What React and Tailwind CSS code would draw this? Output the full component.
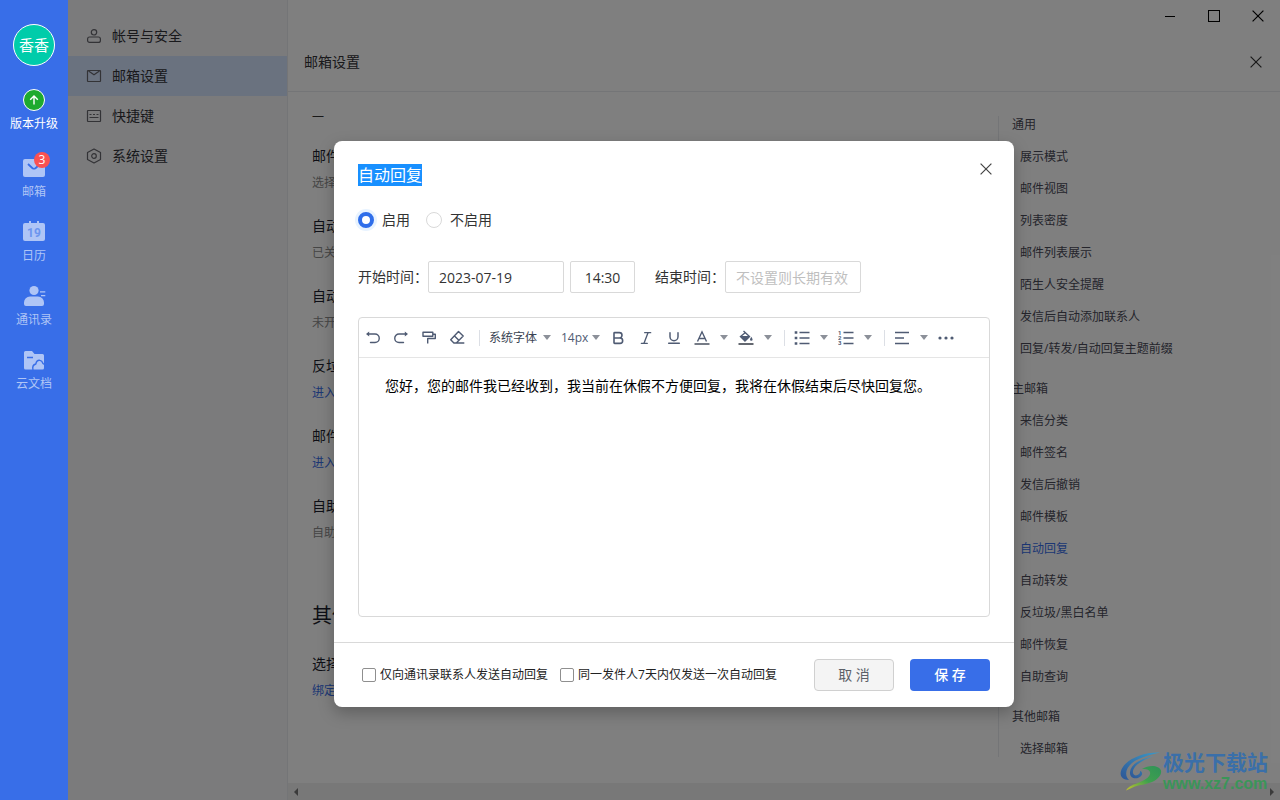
import { Bold, Italic, Underline } from "lucide-react";

const settingsMenu = [
  { label: "帐号与安全", icon: AccountIcon },
  { label: "邮箱设置", icon: MailIcon, active: true },
  { label: "快捷键", icon: KeyboardIcon },
  { label: "系统设置", icon: SystemIcon },
];

const railItems = [
  { label: "邮箱", icon: RailMailIcon, badge: 3 },
  { label: "日历", icon: RailCalendarIcon },
  { label: "通讯录", icon: RailContactsIcon },
  { label: "云文档", icon: RailDocsIcon },
];

const settings = [
  { title: "邮件模板", note: "选择" },
  { title: "自动回复", note: "已关闭" },
  { title: "自动转发", note: "未开启" },
  { title: "反垃圾", link: "进入" },
  { title: "邮件恢复", link: "进入" },
  { title: "自助查询", note: "自助查询" },
];

const anchors = [
  {
    title: "通用",
    items: [
      "展示模式",
      "邮件视图",
      "列表密度",
      "邮件列表展示",
      "陌生人安全提醒",
      "发信后自动添加联系人",
      "回复/转发/自动回复主题前缀",
    ],
  },
  {
    title: "主邮箱",
    items: [
      "来信分类",
      "邮件签名",
      "发信后撤销",
      "邮件模板",
      "自动回复",
      "自动转发",
      "反垃圾/黑白名单",
      "邮件恢复",
      "自助查询",
    ],
  },
  { title: "其他邮箱", items: ["选择邮箱"] },
];

function AccountIcon() {
  return (
    <svg viewBox="0 0 16 16" className="size-4" fill="none" stroke="currentColor" strokeWidth="1.2">
      <circle cx="8" cy="4.3" r="2.7" />
      <rect x="1.6" y="9" width="12.800" height="5.400" rx="2" />
    </svg>
  );
}

function MailIcon() {
  return (
    <svg viewBox="0 0 16 16" className="size-4" fill="none" stroke="currentColor" strokeWidth="1.2">
      <rect x="1.5" y="2.500" width="13" height="11" rx="0.500" />
      <path d="M2.500 3L8 6.800 13.500 3" />
    </svg>
  );
}

function KeyboardIcon() {
  return (
    <svg viewBox="0 0 16 16" className="size-4" fill="none" stroke="currentColor" strokeWidth="1.2">
      <rect x="1.5" y="2.500" width="13" height="11" rx="0.500" />
      <path d="M3.500 6.500h2M7 6.500h2M10.500 6.500h2M3.500 9.500h9" />
    </svg>
  );
}

function SystemIcon() {
  return (
    <svg viewBox="0 0 16 16" className="size-4" fill="none" stroke="currentColor" strokeWidth="1.2">
      <path d="M8 1l6.500 3.600v6.800L8 15l-6.500-3.600V4.600z" strokeLinejoin="round" />
      <circle cx="8" cy="8" r="2.300" />
    </svg>
  );
}

function RailMailIcon() {
  return (
    <svg viewBox="0 0 24 24" className="size-6">
      <rect x="1" y="3" width="22" height="18" rx="2" fill="#afc5f6" />
      <path d="M6 8l4.500 4.200q1.500 1 3 0L18 8" fill="none" stroke="#386ee8" strokeWidth="1.800" />
    </svg>
  );
}

function RailCalendarIcon() {
  return (
    <svg viewBox="0 0 24 24" className="size-6">
      <path d="M7 1h2v2H7zM15 1h2v2h-2z" fill="#afc5f6" />
      <rect x="1" y="3" width="22" height="18" rx="2" fill="#afc5f6" />
      <text x="12" y="17" fontSize="12" fontWeight="700" textAnchor="middle" fill="#6c95ef" fontFamily="Roboto, sans-serif">
        19
      </text>
    </svg>
  );
}

function RailContactsIcon() {
  return (
    <svg viewBox="0 0 24 24" className="size-6" fill="#afc5f6">
      <circle cx="12" cy="6.500" r="4.600" />
      <path d="M8 12.500h8a6 6 0 0 1 6 6v1.500q0 2-2 2H4q-2 0-2-2v-1.500a6 6 0 0 1 6-6z" />
      <path d="M18 7.300h5.300v1.200H18zM19 11h4.300v1.200H19z" />
    </svg>
  );
}

function RailDocsIcon() {
  return (
    <svg viewBox="0 0 24 24" className="size-6">
      <path d="M3.500 3H10l2.500 3H20.500q1.500 0 1.500 1.500V20q0 1.500-1.500 1.500H3.500Q2 21.500 2 20V4.500Q2 3 3.500 3z" fill="#afc5f6" />
      <path d="M5 9.500h6M11 22q-1.200-5 2.800-6 1-4.200 4.200-3.600 2 .3 3 3.100l1.500.8" fill="none" stroke="#386ee8" strokeWidth="1.400" />
    </svg>
  );
}

function CloseIcon({ className }) {
  return (
    <svg viewBox="0 0 12 12" className={className} fill="none" stroke="currentColor" strokeWidth="1.200">
      <path d="M.6.6l10.800 10.800M11.400.6L.6 11.400" />
    </svg>
  );
}

function Caret() {
  return (
    <svg viewBox="0 0 8 5" className="h-[5px] w-2" fill="#8c9099">
      <path d="M0 0h8L4 5z" />
    </svg>
  );
}

function ToolButton({ label, children }) {
  return (
    <button type="button" aria-label={label} className="flex h-7 w-7 items-center justify-center">
      {children}
    </button>
  );
}

function CaretButton({ label }) {
  return (
    <button type="button" aria-label={label} className="flex h-7 w-4 items-center justify-center">
      <Caret />
    </button>
  );
}

function ToolSvg({ children }) {
  return (
    <svg viewBox="0 0 16 16" className="size-4" fill="none" stroke="currentColor" strokeWidth="1.4">
      {children}
    </svg>
  );
}

function Toolbar() {
  return (
    <div className="flex h-10 items-center border-b border-[#e5e5e5] text-[#4f5b73]">
      <ToolButton label="撤销">
        <ToolSvg>
          <path d="M3 4h7a4 4 0 0 1 0 8.500H5.500" strokeLinecap="round" />
          <path d="M1 4l3.200-2.500v5z" fill="currentColor" stroke="none" />
        </ToolSvg>
      </ToolButton>
      <ToolButton label="重做">
        <ToolSvg>
          <path d="M13 4H6a4 4 0 0 0 0 8.500h4.500" strokeLinecap="round" />
          <path d="M15 4l-3.200-2.500v5z" fill="currentColor" stroke="none" />
        </ToolSvg>
      </ToolButton>
      <ToolButton label="格式刷">
        <ToolSvg>
          <path d="M2 2.200h9.800v4H2zM12 4.200h2.300v4.300H6.700V13.500" strokeLinejoin="round" />
        </ToolSvg>
      </ToolButton>
      <ToolButton label="清除格式">
        <ToolSvg>
          <path d="M9.500 1.500l4.700 4.600-6.900 6.900H4.900L1.700 9.700zM5.500 6l4.600 4.500M7 13h8.300" strokeLinejoin="round" />
        </ToolSvg>
      </ToolButton>
      <span className="mx-2 h-4 w-px bg-[#dcdfe5]" />
      <div className="relative flex w-[67px] items-center">
        <select aria-label="字体" className="w-full appearance-none pl-px text-xs text-[#3a4352] outline-none">
          <option>系统字体</option>
        </select>
        <span className="pointer-events-none absolute right-1">
          <Caret />
        </span>
      </div>
      <div className="relative ml-1 flex w-[45px] items-center">
        <select aria-label="字号" className="w-full appearance-none pl-0.5 text-xs text-[#4f5b73] outline-none">
          <option>14px</option>
        </select>
        <span className="pointer-events-none absolute right-1">
          <Caret />
        </span>
      </div>
      <ToolButton label="加粗">
        <Bold size={16} strokeWidth={2.4} />
      </ToolButton>
      <ToolButton label="斜体">
        <Italic size={16} strokeWidth={2} />
      </ToolButton>
      <ToolButton label="下划线">
        <Underline size={16} strokeWidth={2.2} />
      </ToolButton>
      <ToolButton label="文字颜色">
        <ToolSvg>
          <path d="M3.500 11.500L8 1.800l4.500 9.700M5 8.500h6" />
          <path d="M.5 14h15" stroke="#3a4352" />
        </ToolSvg>
      </ToolButton>
      <CaretButton label="选择文字颜色" />
      <ToolButton label="背景颜色">
        <ToolSvg>
          <path d="M5.500 1l6 5.500-4.500 4.500-4.500-4.500L7.500 2.500" />
          <path d="M2.500 6h9L7 11zM13.300 6.800q2.600 4 0 4t0-4z" fill="currentColor" stroke="none" />
          <path d="M.5 14h15" stroke="#222833" />
        </ToolSvg>
      </ToolButton>
      <CaretButton label="选择背景颜色" />
      <span className="mr-[3px] ml-2 h-4 w-px bg-[#dcdfe5]" />
      <ToolButton label="无序列表">
        <ToolSvg>
          <path d="M5.500 2.500h10M5.500 8h10M5.500 13.500h10" />
          <path d="M.7 1.200h2.600v2.600H.7zM.7 6.700h2.600v2.600H.7zM.7 12.200h2.600v2.600H.7z" fill="currentColor" stroke="none" />
        </ToolSvg>
      </ToolButton>
      <CaretButton label="无序列表样式" />
      <ToolButton label="有序列表">
        <ToolSvg>
          <path d="M5.500 2.500h10M5.500 8h10M5.500 13.500h10" />
          <g fill="currentColor" stroke="none" fontSize="6" fontWeight="700" fontFamily="Roboto, sans-serif">
            <text x="0" y="5">1</text>
            <text x="0" y="10">2</text>
            <text x="0" y="15">3</text>
          </g>
        </ToolSvg>
      </ToolButton>
      <CaretButton label="有序列表样式" />
      <span className="mr-[3px] ml-2 h-4 w-px bg-[#dcdfe5]" />
      <ToolButton label="对齐">
        <ToolSvg>
          <path d="M1 2.500h14M1 8h9M1 13.500h14" />
        </ToolSvg>
      </ToolButton>
      <CaretButton label="对齐方式" />
      <ToolButton label="更多">
        <svg viewBox="0 0 16 16" className="size-4" fill="currentColor">
          <circle cx="2" cy="8" r="1.600" />
          <circle cx="8" cy="8" r="1.600" />
          <circle cx="14" cy="8" r="1.600" />
        </svg>
      </ToolButton>
    </div>
  );
}

function AutoReplyDialog() {
  return (
    <div role="dialog" aria-labelledby="dialog-title" className="w-full max-w-[680px] rounded-lg bg-white shadow-[0_6px_16px_rgba(0,0,0,0.25)]">
      <div className="px-6 pt-5 pb-[25px]">
        <div className="flex items-start justify-between">
          <h2 id="dialog-title" className="text-base leading-7 text-white">
            <span className="bg-[#1890ff]">自动回复</span>
          </h2>
          <button type="button" aria-label="关闭" className="-mr-1 flex h-4 w-4 items-center justify-center text-[#444]">
            <CloseIcon className="size-3" />
          </button>
        </div>

        <div className="mt-[19px] flex h-6 items-center gap-4 text-sm text-[#333]">
          <label className="flex items-center gap-2">
            <input
              type="radio"
              name="enabled"
              defaultChecked
              className="size-4 appearance-none rounded-full border-4 border-[#2f6eea] bg-white shadow-[0_0_0_3px_#e8f3ff]"
            />
            启用
          </label>
          <label className="flex items-center gap-2">
            <input type="radio" name="enabled" className="size-4 appearance-none rounded-full border border-[#d9d9d9] bg-white" />
            不启用
          </label>
        </div>

        <div className="mt-[29px] flex items-center text-sm text-[#333]">
          <label htmlFor="start-date">开始时间：</label>
          <input id="start-date" defaultValue="2023-07-19" className="h-8 w-[136px] rounded-xs border border-[#d9d9d9] px-2.5 outline-none" />
          <input aria-label="开始时刻" defaultValue="14:30" className="ml-1.5 h-8 w-[65px] rounded-xs border border-[#d9d9d9] text-center outline-none" />
          <label htmlFor="end-date" className="ml-5">
            结束时间：
          </label>
          <input
            id="end-date"
            placeholder="不设置则长期有效"
            className="h-8 w-[136px] rounded-xs border border-[#d9d9d9] px-2.5 outline-none placeholder:text-[#bfbfbf]"
          />
        </div>

        <div className="mt-6 rounded border border-[#d9d9d9]">
          <Toolbar />
          <textarea
            aria-label="回复内容"
            className="block h-[258px] w-full resize-none px-[26px] py-4 text-sm leading-6 text-black outline-none"
            defaultValue="您好，您的邮件我已经收到，我当前在休假不方便回复，我将在休假结束后尽快回复您。"
          />
        </div>
      </div>

      <div className="flex items-center border-t border-[#d9d9d9] py-4 pr-6 pl-7 text-xs text-[#222]">
        <label className="flex items-center gap-1">
          <input type="checkbox" className="size-3.5 appearance-none rounded-xs border border-[#8f8f8f]" />
          仅向通讯录联系人发送自动回复
        </label>
        <label className="ml-3 flex items-center gap-1">
          <input type="checkbox" className="size-3.5 appearance-none rounded-xs border border-[#8f8f8f]" />
          同一发件人7天内仅发送一次自动回复
        </label>
        <button type="button" className="ml-auto h-8 w-20 rounded border border-[#d0d0d0] bg-[#f4f4f4] text-sm text-[#5c6068]">
          取 消
        </button>
        <button type="button" className="ml-4 h-8 w-20 rounded bg-[#386ee8] text-sm font-medium text-white">
          保 存
        </button>
      </div>
    </div>
  );
}

function Rail() {
  return (
    <nav className="flex w-[68px] shrink-0 flex-col items-center bg-[#386ee8] pt-6 text-xs leading-4 text-[#afc5f6]">
      <div className="flex size-[42px] items-center justify-center rounded-full border border-white bg-[#00ccaa] text-[15px] text-white">香香</div>
      <a href="#upgrade" className="mt-[22px] flex flex-col items-center gap-1 text-white">
        <svg viewBox="0 0 24 24" className="size-6" fill="none" stroke="white">
          <circle cx="12" cy="12" r="10.500" fill="#1daa2e" />
          <path d="M12 16.500V8M8.200 11.700L12 8l3.800 3.700" strokeWidth="1.400" />
        </svg>
        版本升级
      </a>
      <div className="mt-6 flex flex-col gap-5">
        {railItems.map((item) => (
          <a key={item.label} href="#rail" className="relative flex flex-col items-center gap-1">
            <item.icon />
            {item.badge ? (
              <span className="absolute -top-1 left-1/2 flex size-4 items-center justify-center rounded-full bg-[#fa5151] text-xs text-white">{item.badge}</span>
            ) : null}
            {item.label}
          </a>
        ))}
      </div>
    </nav>
  );
}

function SettingRow({ title, note, link }) {
  return (
    <div>
      <h3 className="text-sm leading-6 text-[#1c1f2e]">{title}</h3>
      {link ? (
        <a href="#setting" className="block text-xs leading-[30px] text-[#386ee8]">
          {link}
        </a>
      ) : (
        <p className="text-xs leading-[30px] text-[#8c8c8c]">{note}</p>
      )}
    </div>
  );
}

function Watermark() {
  return (
    <div className="absolute right-3 bottom-1.5 flex items-center">
      <svg viewBox="0 0 44 42" className="h-[42px] w-11">
        <defs>
          <linearGradient id="swoosh-blue" x1="0" y1="1" x2="1" y2="0">
            <stop offset="0" stopColor="#2d5595" />
            <stop offset="1" stopColor="#3c9ac8" />
          </linearGradient>
          <linearGradient id="swoosh-green" x1="0" y1="1" x2="1" y2="0">
            <stop offset="0" stopColor="#c5c22d" />
            <stop offset="0.500" stopColor="#3fa04e" />
            <stop offset="1" stopColor="#2f9258" />
          </linearGradient>
        </defs>
        <path d="M41 1.500C24 1 8 8 3 17.500c-3.500 7 0 11.500 7 11.500C5 24 7 17 13 12 20 6.500 30 4 41 1.500z" fill="url(#swoosh-blue)" />
        <path d="M35 5C21 8 12 13 11 21c-.6 6.500 6 8 10.500 4.500 2.500-2 2-5-.5-5.500 1 4-6 6.500-7 2C13 15.500 23 9 35 5z" fill="url(#swoosh-blue)" />
        <path d="M23 18c7-4.500 17-4 19 1.500 1 4-3 9-9 11.500-6 2.500-13 3-17 4.500l-9 4c3-5 8-6 13-8 8-3 12-7 11-10.500-.7-2.500-4-3.500-8-3z" fill="url(#swoosh-green)" />
      </svg>
      <div className="flex flex-col">
        <span className="text-[21px] leading-6 font-bold text-[#3a6fa9]">极光下载站</span>
        <span className="font-['Liberation_Sans',sans-serif] text-base leading-5 font-bold text-[#3b9558]">www.xz7.com</span>
      </div>
    </div>
  );
}

export default function App() {
  return (
    <div className="flex min-h-screen bg-white font-['Open_Sans','Noto_Sans_CJK_SC',sans-serif]">
      <Rail />

      <div className="relative flex min-w-0 flex-1">
        <aside className="w-[220px] shrink-0 border-r border-[#e8eaee] bg-[#f6f6f9] pt-4 text-sm text-[#333338]">
          {settingsMenu.map((item) => (
            <a key={item.label} href="#menu" className={item.active ? "flex h-10 items-center gap-2.5 bg-[#d5e4ff] px-[18px]" : "flex h-10 items-center gap-2.5 px-[18px]"}>
              <span className="text-[#66666c]">
                <item.icon />
              </span>
              {item.label}
            </a>
          ))}
        </aside>

        <main className="flex min-w-0 flex-1 flex-col">
          <div className="flex h-8 justify-end text-black">
            <button type="button" aria-label="最小化" className="flex w-11 items-center justify-center">
              <span className="h-px w-2.5 bg-black" />
            </button>
            <button type="button" aria-label="最大化" className="flex w-11 items-center justify-center">
              <span className="size-3 border border-black" />
            </button>
            <button type="button" aria-label="关闭窗口" className="flex w-11 items-center justify-center">
              <CloseIcon className="size-3" />
            </button>
          </div>
          <header className="flex h-[60px] items-center justify-between border-b border-[#e8eaee] pr-[18px] pl-4">
            <h1 className="text-sm text-[#333338]">邮箱设置</h1>
            <button type="button" aria-label="关闭设置" className="text-[#333]">
              <CloseIcon className="size-3" />
            </button>
          </header>

          <div className="flex flex-1">
            <section className="min-w-0 flex-1 pt-3 pl-6">
              <p className="text-xs leading-7 text-[#333]">一</p>
              <div className="mt-3 flex flex-col gap-4">
                {settings.map((item) => (
                  <SettingRow key={item.title} {...item} />
                ))}
              </div>
              <h2 className="mt-[52px] mb-5 text-xl leading-8 text-[#1c1f2e]">其他邮箱</h2>
              <SettingRow title="选择邮箱" link="绑定" />
            </section>

            <nav className="mt-6 mb-5 flex w-[282px] shrink-0 flex-col gap-6 self-start border-l border-[#e8eaee] pt-px pl-[13px] text-xs leading-4 text-[#4a4a58]">
              {anchors.map((group) => (
                <div key={group.title} className="flex flex-col items-start gap-4">
                  <a href="#group">{group.title}</a>
                  {group.items.map((item) => (
                    <a key={item} href="#anchor" className={item === "自动回复" ? "pl-2 text-[#386ee8]" : "pl-2"}>
                      {item}
                    </a>
                  ))}
                </div>
              ))}
            </nav>
          </div>

          <div className="flex h-[17px] items-center justify-between bg-[#f0f0f0] px-1.5">
            <svg viewBox="0 0 4 8" className="h-2 w-1" fill="#777">
              <path d="M4 0v8L0 4z" />
            </svg>
            <svg viewBox="0 0 4 8" className="h-2 w-1" fill="#777">
              <path d="M0 0v8l4-4z" />
            </svg>
          </div>
        </main>

        <div className="absolute inset-0 flex items-start justify-center bg-black/50 pt-[141px]">
          <AutoReplyDialog />
        </div>
        <Watermark />
      </div>
    </div>
  );
}
